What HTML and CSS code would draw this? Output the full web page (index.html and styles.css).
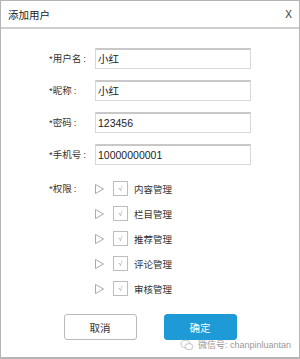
FILE: index.html
```html
<!DOCTYPE html>
<html lang="zh">
<head>
<meta charset="utf-8">
<link rel="stylesheet" href="styles.css">
</head>
<body>
<div class="dialog">
  <div class="header">
    <span class="title">添加用户</span>
    <span class="close">X</span>
  </div>
  <div class="form">
    <div class="label">*用户名<span class="colon">:</span></div>
    <div class="input">小红</div>
    <div class="label">*昵称<span class="colon">:</span></div>
    <div class="input">小红</div>
    <div class="label">*密码<span class="colon">:</span></div>
    <div class="input">123456</div>
    <div class="label">*手机号<span class="colon">:</span></div>
    <div class="input">10000000001</div>
    <div class="label perm-label">*权限<span class="colon">:</span></div>
    <div class="tree">
      <div class="node"><svg class="tri" width="9" height="10" viewBox="0 0 9 10"><polygon points="0.5,0.5 8.5,5 0.5,9.5" fill="none" stroke="#aaa" stroke-width="1"/></svg><span class="check">√</span><span class="name">内容管理</span></div>
      <div class="node"><svg class="tri" width="9" height="10" viewBox="0 0 9 10"><polygon points="0.5,0.5 8.5,5 0.5,9.5" fill="none" stroke="#aaa" stroke-width="1"/></svg><span class="check">√</span><span class="name">栏目管理</span></div>
      <div class="node"><svg class="tri" width="9" height="10" viewBox="0 0 9 10"><polygon points="0.5,0.5 8.5,5 0.5,9.5" fill="none" stroke="#aaa" stroke-width="1"/></svg><span class="check">√</span><span class="name">推荐管理</span></div>
      <div class="node"><svg class="tri" width="9" height="10" viewBox="0 0 9 10"><polygon points="0.5,0.5 8.5,5 0.5,9.5" fill="none" stroke="#aaa" stroke-width="1"/></svg><span class="check">√</span><span class="name">评论管理</span></div>
      <div class="node"><svg class="tri" width="9" height="10" viewBox="0 0 9 10"><polygon points="0.5,0.5 8.5,5 0.5,9.5" fill="none" stroke="#aaa" stroke-width="1"/></svg><span class="check">√</span><span class="name">审核管理</span></div>
    </div>
  </div>
  <div class="actions">
    <button class="btn cancel">取消</button>
    <button class="btn ok">确定</button>
  </div>
  <div class="watermark">
    <svg width="14" height="12" viewBox="0 0 14 12"><ellipse cx="5.5" cy="5" rx="4.6" ry="3.8" fill="none" stroke="#bbb" stroke-width="0.9"/><ellipse cx="9" cy="7.6" rx="3.8" ry="3.1" fill="#fff" stroke="#bbb" stroke-width="0.9"/></svg>
    <span>微信号: chanpinluantan</span>
  </div>
</div>
</body>
</html>
```
FILE: styles.css
```css
* { box-sizing: border-box; }
html, body { margin: 0; padding: 0; background: #fff; }
body {
  font-family: "Liberation Sans", "Noto Sans CJK SC", sans-serif;
  color: #333;
}
.dialog {
  position: relative;
  width: 300px;
  height: 359px;
  border: 1px solid #b5b5b5;
  border-bottom-width: 2px;
}
.header {
  height: 28px;
  border-bottom: 2px solid #cfcfcf;
  display: flex;
  align-items: center;
  justify-content: space-between;
  padding: 0 7px 0 7px;
}
.title {
  font-size: 10.5px;
  color: #222;
}
.close {
  font-size: 10px;
  color: #333;
}
.form {
  display: grid;
  grid-template-columns: 46px 156px;
  row-gap: 11px;
  padding-top: 19px;
  padding-left: 48px;
}
.label {
  font-size: 9.5px;
  color: #333;
  line-height: 21px;
  white-space: nowrap;
}
.colon { margin-left: 2px; }
.input {
  height: 21px;
  border: 1px solid #d8d8d8;
  border-top: 2px solid #c8c8c8;
  font-size: 10.5px;
  line-height: 18px;
  padding-left: 2px;
  color: #222;
}
.perm-label { line-height: 25px; }
.tree { display: flex; flex-direction: column; }
.node {
  height: 25px;
  display: flex;
  align-items: center;
}
.tri { margin-right: 9px; margin-top: 1px; }
.check {
  width: 15px;
  height: 15px;
  border: 1px solid #bdbdbd;
  font-size: 7px;
  color: #999;
  display: flex;
  align-items: center;
  justify-content: center;
  margin-right: 6px;
}
.name { font-size: 9.5px; color: #333; }
.actions {
  display: flex;
  justify-content: center;
  gap: 27px;
  margin-top: 13px;
}
.btn {
  width: 73px;
  height: 26px;
  border-radius: 3px;
  font-family: "Liberation Sans", "Noto Sans CJK SC", sans-serif;
  font-size: 10.5px;
  padding: 0;
}
.cancel {
  background: #fff;
  border: 1px solid #bbb;
  color: #333;
}
.ok {
  background: #1e9ad6;
  border: 1px solid #1e9ad6;
  color: #fff;
}
.watermark {
  position: absolute;
  right: 8px;
  bottom: 6px;
  display: flex;
  align-items: center;
  gap: 4px;
  font-size: 9px;
  color: #999;
}
```
